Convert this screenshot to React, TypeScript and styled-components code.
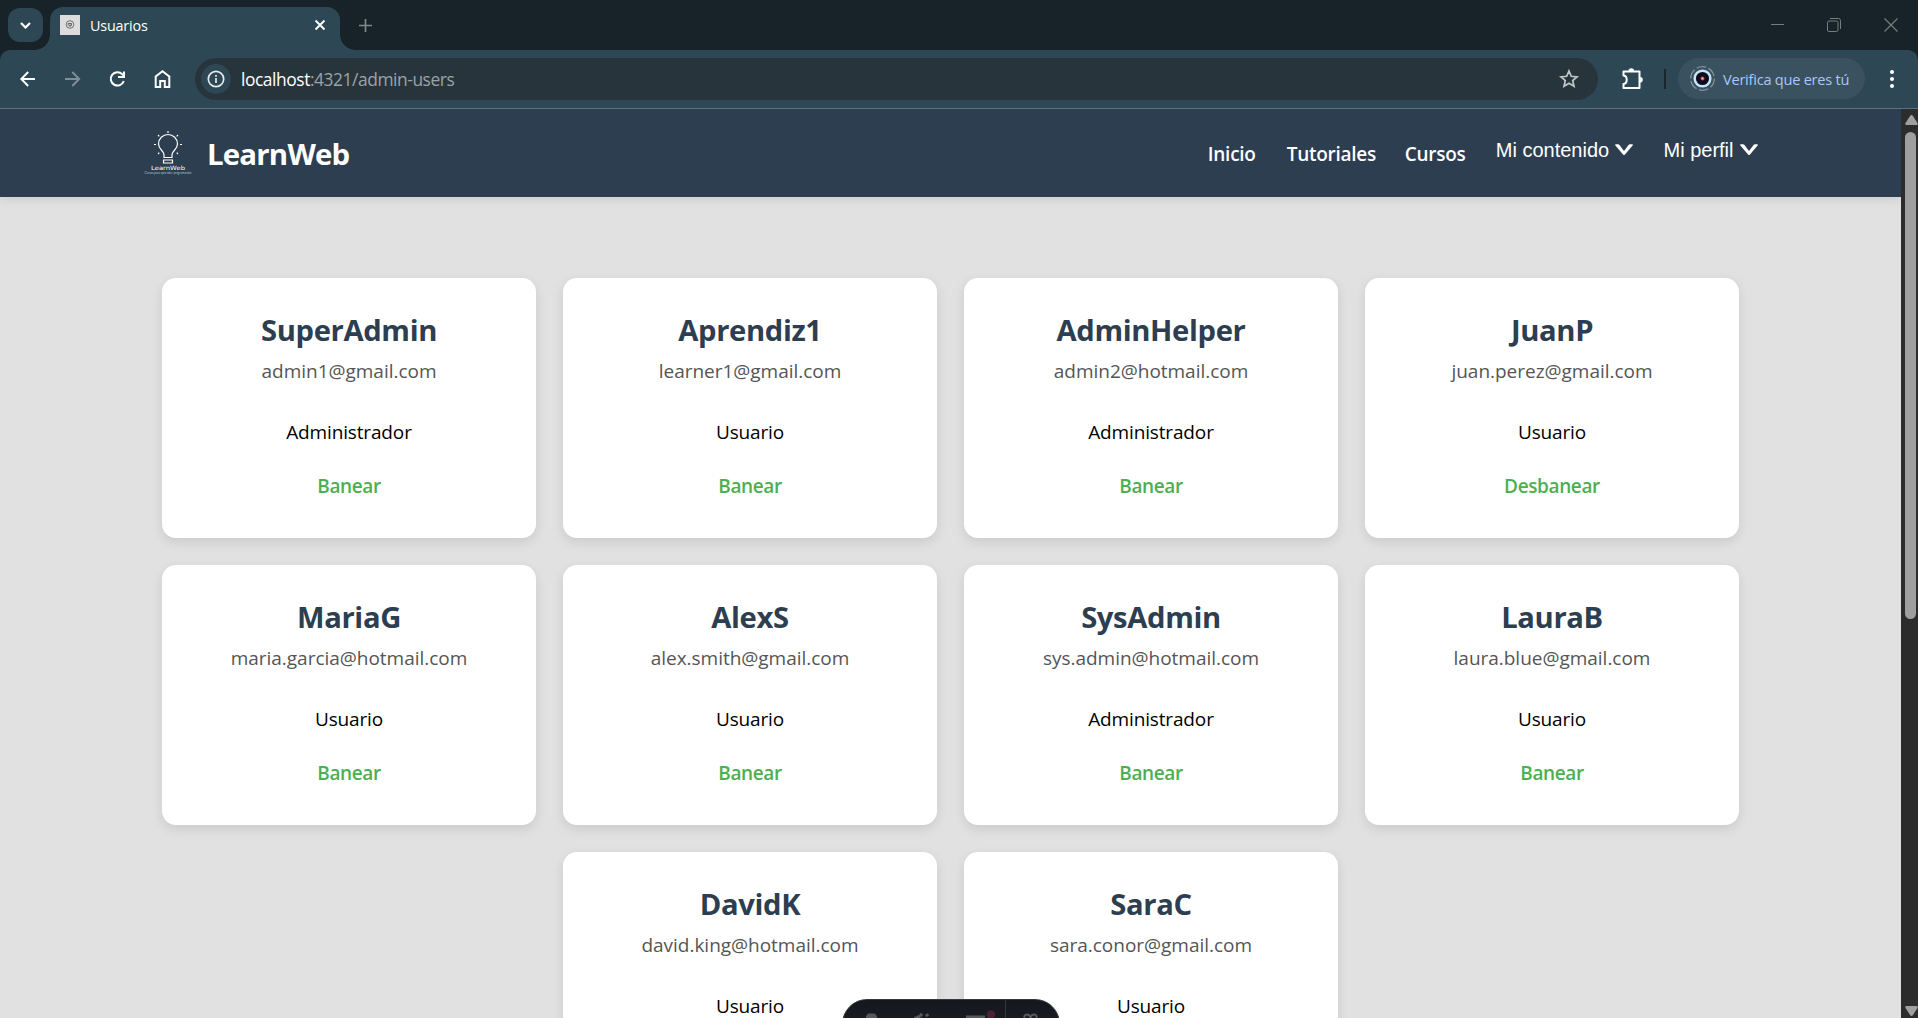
import React from "react";
import styled, { createGlobalStyle } from "styled-components";

const ui = `"Open Sans", "Noto Sans", sans-serif`;

const GlobalStyle = createGlobalStyle`
  * { box-sizing: border-box; }
  body { margin: 0; background: #e1e1e1; font-family: ${ui}; overflow: hidden; }
  h1, h2, p { margin: 0; }
  button { border: 0; padding: 0; background: none; font: inherit; color: inherit; }
  svg { display: block; flex: none; }
`;

const Window = styled.div`
  display: flex;
  flex-direction: column;
  width: 1918px;
  height: 1018px;
  overflow: hidden;
`;

/* ---------- browser chrome ---------- */

const TabStrip = styled.div`
  display: flex;
  flex: none;
  height: 50px;
  padding-left: 8px;
  background: #172329;
`;

const TabSearch = styled.button`
  display: flex;
  align-items: center;
  justify-content: center;
  width: 35px;
  height: 34px;
  margin-top: 8px;
  border-radius: 12px;
  background: #2e4755;
`;

const Tab = styled.div`
  position: relative;
  display: flex;
  align-items: center;
  width: 290px;
  height: 43px;
  margin: 7px 0 0 7px;
  padding: 0 10px 7px 10px;
  border-radius: 13px 13px 0 0;
  background: #2e4755;
  &::before,
  &::after {
    content: "";
    position: absolute;
    bottom: 0;
    width: 15px;
    height: 15px;
  }
  &::before {
    left: -15px;
    background: radial-gradient(circle at 0 0, transparent 14.5px, #2e4755 15px);
  }
  &::after {
    right: -15px;
    background: radial-gradient(circle at 100% 0, transparent 14.5px, #2e4755 15px);
  }
`;

const TabTitle = styled.span`
  flex: 1;
  margin-left: 10px;
  color: #fff;
  font-size: 14.4px;
  letter-spacing: -0.2px;
`;

const NewTab = styled.button`
  display: flex;
  align-items: center;
  height: 50px;
  margin-left: 19px;
`;

const WindowButtons = styled.div`
  display: flex;
  align-items: center;
  gap: 43px;
  height: 50px;
  margin-left: auto;
  padding-right: 20px;
`;

const ToolbarBack = styled.div`
  flex: none;
  background: #172329;
`;

const Toolbar = styled.div`
  display: flex;
  align-items: center;
  height: 59px;
  padding: 0 20px 1px 16px;
  border-bottom: 1px solid #587280;
  border-radius: 10px 10px 0 0;
  background: #2e4755;
`;

const NavIcons = styled.div`
  display: flex;
  gap: 21px;
`;

const UrlBar = styled.div`
  display: flex;
  align-items: center;
  width: 1403px;
  height: 42px;
  margin-left: 20px;
  padding: 0 18px 0 6px;
  border-radius: 21px;
  background: #28343c;
`;

const InfoBadge = styled.span`
  display: flex;
  align-items: center;
  justify-content: center;
  width: 30px;
  height: 30px;
  border-radius: 50%;
  background: #2e4755;
`;

const Url = styled.span`
  flex: 1;
  margin: 1px 0 0 10px;
  color: #9aa3a8;
  font-size: 17.4px;
  line-height: 24px;
  letter-spacing: -0.44px;
  b { color: #fff; font-weight: 400; }
`;

const Extensions = styled.button`
  margin-left: 21px;
`;

const Separator = styled.span`
  width: 2px;
  height: 20px;
  margin: 0 12px 0 19px;
  background: #18262d;
`;

const Profile = styled.button`
  display: flex;
  align-items: center;
  width: 187px;
  height: 41px;
  padding-left: 12px;
  border-radius: 21px;
  background: #3a515f;
  color: #a8c7fa;
  font-size: 14.6px;
  letter-spacing: -0.25px;
  span { margin-left: 7px; white-space: nowrap; }
`;

const MenuDots = styled.div`
  margin-left: auto;
`;

/* ---------- page ---------- */

const Viewport = styled.div`
  display: flex;
  flex: 1;
  min-height: 0;
`;

const Page = styled.div`
  flex: 1;
  overflow: hidden;
  background: #e1e1e1;
`;

const Header = styled.header`
  display: flex;
  align-items: flex-start;
  height: 88px;
  padding: 0 143px 0 144px;
  background: #2c3e50;
  box-shadow: 0 2px 10px rgba(0, 0, 0, 0.1);
`;

const Logo = styled.div`
  display: flex;
  align-items: flex-start;
  flex: 1;
  padding-top: 21px;
`;

const Brand = styled.h1`
  margin: 3px 0 0 13px;
  color: #fff;
  font-size: 29.4px;
  font-weight: 700;
  line-height: 42px;
  letter-spacing: -0.8px;
`;

const Nav = styled.nav`
  display: flex;
  align-items: flex-start;
  color: #fff;
`;

const NavLink = styled.a<{ $w: number }>`
  width: ${(p) => p.$w}px;
  margin: 31px 30px 0 0;
  font-size: 19px;
  font-weight: 600;
  line-height: 28px;
  letter-spacing: -0.27px;
  white-space: nowrap;
`;

const NavDrop = styled.button<{ $last?: boolean }>`
  display: flex;
  align-items: center;
  gap: ${(p) => (p.$last ? 6.5 : 6.3)}px;
  margin: 29px ${(p) => (p.$last ? 0 : 30)}px 0 0;
  font-family: "Liberation Sans", Arial, sans-serif;
  font-size: 20px;
  line-height: 24px;
  white-space: nowrap;
`;

const Cards = styled.main`
  display: flex;
  flex-wrap: wrap;
  justify-content: center;
  gap: 27px;
  width: 1577px;
  margin: 81px 0 0 162px;
`;

const Card = styled.article`
  display: flex;
  flex-direction: column;
  align-items: center;
  width: 374px;
  height: 260px;
  padding-top: 32px;
  border-radius: 14px;
  background: #fff;
  box-shadow: 0 4px 12px rgba(0, 0, 0, 0.1);
`;

const Name = styled.h2`
  color: #2c3e50;
  font-size: 29.2px;
  font-weight: 700;
  line-height: 40px;
  letter-spacing: -0.35px;
`;

const Email = styled.p`
  margin-top: 6px;
  color: #555;
  font-size: 19px;
  line-height: 30px;
  letter-spacing: -0.02px;
`;

const Role = styled.p`
  margin-top: 35px;
  color: #000;
  font-size: 19px;
  line-height: 22px;
  letter-spacing: -0.15px;
`;

const Action = styled.button`
  margin-top: 28px;
  color: #4caf50;
  font-size: 19px;
  font-weight: 600;
  line-height: 30px;
  letter-spacing: -0.38px;
`;

const Scrollbar = styled.div`
  display: flex;
  flex-direction: column;
  align-items: center;
  width: 17px;
  padding: 6px 0 2px 3px;
  background: #2c2c2c;
`;

const Thumb = styled.div`
  width: 11px;
  height: 487px;
  margin: 7px 1px auto 0;
  border-radius: 6px;
  background: #9f9f9f;
`;

const DevToolbar = styled.div`
  position: fixed;
  left: 842px;
  top: 999px;
  display: flex;
  width: 218px;
  height: 50px;
  border: 1px solid #343841;
  border-radius: 25px;
  background: linear-gradient(#14171e, #191b20 40%);
`;

type User = { name: string; email: string; role: string; banned?: boolean };

const users: User[] = [
  { name: "SuperAdmin", email: "admin1@gmail.com", role: "Administrador" },
  { name: "Aprendiz1", email: "learner1@gmail.com", role: "Usuario" },
  { name: "AdminHelper", email: "admin2@hotmail.com", role: "Administrador" },
  { name: "JuanP", email: "juan.perez@gmail.com", role: "Usuario", banned: true },
  { name: "MariaG", email: "maria.garcia@hotmail.com", role: "Usuario" },
  { name: "AlexS", email: "alex.smith@gmail.com", role: "Usuario" },
  { name: "SysAdmin", email: "sys.admin@hotmail.com", role: "Administrador" },
  { name: "LauraB", email: "laura.blue@gmail.com", role: "Usuario" },
  { name: "DavidK", email: "david.king@hotmail.com", role: "Usuario" },
  { name: "SaraC", email: "sara.conor@gmail.com", role: "Usuario" },
];

const Chevron = () => (
  <svg width="18" height="12" viewBox="0 0 18 12" fill="#fff">
    <path d="M0 1Q0 .3 1 .3H3Q4 .3 4.500 1L9 6.900 13.500 1Q14 .3 15 .3H17Q18 .3 18 1L10 10.500Q9 11.500 8 10.500Z" />
  </svg>
);

const LogoMark = () => (
  <svg width="50" height="46" viewBox="0 0 50 46" fill="none" stroke="#fff">
    <path d="M20 27.500v-3c0-3.500-5.500-5-5.500-10.500a9.500 9.500 0 0 1 19 0c0 5.500-5.500 7-5.500 10.500v3z" strokeWidth="1.200" />
    <path d="M19.500 30h9v3h-9z" strokeWidth="1.200" />
    <path d="M24 1v2M14 5l1.300 1.300M34 5l-1.300 1.300M10 14.500h2M36 14.500h2M14 24l1.300-1.300M34 24l-1.300-1.300" strokeWidth="1.200" />
    <text x="24" y="39.500" textAnchor="middle" fill="#fff" stroke="none" fontFamily="DejaVu Sans, sans-serif" fontSize="5.800" textLength="34" lengthAdjust="spacingAndGlyphs">LearnWeb</text>
    <text x="24" y="43.600" textAnchor="middle" fill="#b8c0c8" stroke="none" fontFamily="Lato, sans-serif" fontSize="3" textLength="47" lengthAdjust="spacingAndGlyphs">Cursos para aprender programación</text>
  </svg>
);

export default function App() {
  return (
    <Window>
      <GlobalStyle />
      <TabStrip>
        <TabSearch aria-label="Buscar pestañas">
          <svg width="11" height="7" viewBox="0 0 11 7" fill="none" stroke="#fff" strokeWidth="2.200"><path d="M1 1l4.500 4.500L10 1" /></svg>
        </TabSearch>
        <Tab>
          <svg width="20" height="20" viewBox="0 0 20 20">
            <rect width="20" height="20" fill="#dcdcdc" />
            <circle cx="10" cy="9.500" r="3.800" fill="none" stroke="#555" strokeWidth=".8" />
            <path d="M8.200 10.500v-2h3.300v1.800H9M10 10.500v1.500" fill="none" stroke="#444" strokeWidth=".8" />
          </svg>
          <TabTitle>Usuarios</TabTitle>
          <svg width="20" height="20" viewBox="0 0 20 20" stroke="#fff" strokeWidth="1.900"><path d="M5.500 5.500l9 9M14.500 5.500l-9 9" /></svg>
        </Tab>
        <NewTab aria-label="Nueva pestaña">
          <svg width="13" height="13" viewBox="0 0 13 13" stroke="#7f888c" strokeWidth="1.700"><path d="M6.500 0v13M0 6.500h13" /></svg>
        </NewTab>
        <WindowButtons>
          <svg width="13" height="14" viewBox="0 0 13 14" stroke="#747d81"><path d="M0 6.500h13" /></svg>
          <svg width="14" height="14" viewBox="0 0 14 14" fill="none" stroke="#747d81"><rect x="0.500" y="3" width="10.500" height="10.500" rx="1.500" /><path d="M3 .5h8.500a2 2 0 0 1 2 2V11" /></svg>
          <svg width="14" height="14" viewBox="0 0 14 14" stroke="#747d81" strokeWidth="1.200"><path d="M.5.5l13 13M13.500.5l-13 13" /></svg>
        </WindowButtons>
      </TabStrip>
      <ToolbarBack>
        <Toolbar>
          <NavIcons>
            <svg width="24" height="24" viewBox="0 0 24 24" fill="none" stroke="#fff" strokeWidth="1.900"><path d="M19 12H5.500M12.200 5L5.300 12l6.900 7" /></svg>
            <svg width="24" height="24" viewBox="0 0 24 24" fill="none" stroke="#7f8f98" strokeWidth="1.900"><path d="M4 12h14M11.300 5l6.900 7-6.900 7" /></svg>
            <svg width="24" height="24" viewBox="0 0 24 24" fill="none" stroke="#fff" strokeWidth="2"><path d="M17.800 14A6.700 6.700 0 1 1 16.300 7.200l2 2.300M18 4.500V10h-6" /></svg>
            <svg width="24" height="24" viewBox="0 0 24 24" fill="none" stroke="#fff" strokeWidth="2"><path d="M4.700 20V9.500L11.500 4.300l6.800 5.200V20h-4.500v-6h-4.600v6z" /></svg>
          </NavIcons>
          <UrlBar>
            <InfoBadge>
              <svg width="18" height="18" viewBox="0 0 18 18" fill="none" stroke="#e4e9ec" strokeWidth="1.700"><circle cx="9" cy="9" r="7.700" /><path d="M9 8v5M9 5v1.800" /></svg>
            </InfoBadge>
            <Url><b>localhost</b>:4321/admin-users</Url>
            <svg width="22" height="22" viewBox="0 0 22 22" fill="none" stroke="#c2c6c9" strokeWidth="1.700"><path d="M11 3l2.300 5.300 5.700.5-4.300 3.800 1.300 5.600-5-3-5 3 1.300-5.600L3 8.800l5.700-.5z" /></svg>
          </UrlBar>
          <Extensions aria-label="Extensiones">
            <svg width="26" height="26" viewBox="0 0 26 26" fill="none" stroke="#fff" strokeWidth="2" strokeLinejoin="round"><path d="M4.500 5.500h16v16.500H4.500v-4c4.300-.5 4.300-8 0-8.500z" /><path d="M9.500 5a2.800 2.800 0 0 1 5.600 0zM21 11a2.800 2.800 0 0 1 0 5.600z" fill="#fff" stroke="none" /></svg>
          </Extensions>
          <Separator />
          <Profile>
            <svg width="26" height="26" viewBox="0 0 26 26" fill="none">
              <circle cx="12.500" cy="12.500" r="11.800" stroke="#83929b" strokeWidth="1.300" strokeDasharray="9.800 2.500" />
              <circle cx="12.500" cy="12.500" r="7.800" fill="#0c0a1c" stroke="#c5e5fb" strokeWidth="2.500" />
              <circle cx="12.500" cy="12.500" r="2" fill="#d63a68" /><circle cx="12.500" cy="12.500" r="1" fill="#ffd34d" />
            </svg>
            <span>Verifica que eres tú</span>
          </Profile>
          <MenuDots>
            <svg width="12" height="20" viewBox="0 0 12 20" fill="#fff"><circle cx="6" cy="3" r="2" /><circle cx="6" cy="10" r="2" /><circle cx="6" cy="17" r="2" /></svg>
          </MenuDots>
        </Toolbar>
      </ToolbarBack>
      <Viewport>
        <Page>
          <Header>
            <Logo>
              <LogoMark />
              <Brand>LearnWeb</Brand>
            </Logo>
            <Nav>
              <NavLink $w={49}>Inicio</NavLink>
              <NavLink $w={88}>Tutoriales</NavLink>
              <NavLink $w={61}>Cursos</NavLink>
              <NavDrop>Mi contenido<Chevron /></NavDrop>
              <NavDrop $last>Mi perfil<Chevron /></NavDrop>
            </Nav>
          </Header>
          <Cards>
            {users.map((u) => (
              <Card key={u.name}>
                <Name>{u.name}</Name>
                <Email>{u.email}</Email>
                <Role>{u.role}</Role>
                <Action>{u.banned ? "Desbanear" : "Banear"}</Action>
              </Card>
            ))}
          </Cards>
        </Page>
        <Scrollbar>
          <svg width="13" height="10" viewBox="0 0 13 10" fill="#9f9f9f"><path d="M6.500 0q.8 0 1.300.8L12.500 8q.8 2-1 2h-10q-1.800 0-1-2L5.200.8Q5.700 0 6.500 0z" /></svg>
          <Thumb />
          <svg width="13" height="10" viewBox="0 0 13 10" fill="#9f9f9f"><path d="M6.500 10q.8 0 1.300-.8L12.500 2q.8-2-1-2h-10q-1.800 0-1 2l4.700 7.200q.5.800 1.300.8z" /></svg>
        </Scrollbar>
      </Viewport>
      <DevToolbar>
        <svg width="216" height="18" viewBox="0 0 216 18" fill="#56585d">
          <path d="M23 18v-1q1-3.500 3-3.500h5q2 0 3 3.500v1zM77 13l3 1-1 3-3-1zM82 15l3-2 1 3-3 1zM71 17l5-2 2 3h-7zM123 15.500h19v2.500h-19z" />
          <circle cx="148" cy="14.500" r="4.300" fill="#4b2233" />
          <path d="M162.500 0v18" stroke="#343841" />
          <path d="M181.500 18c-1-4.500 5-5 6 0 1-5 7-4.500 6 0" fill="none" stroke="#56585d" strokeWidth="2" />
        </svg>
      </DevToolbar>
    </Window>
  );
}
